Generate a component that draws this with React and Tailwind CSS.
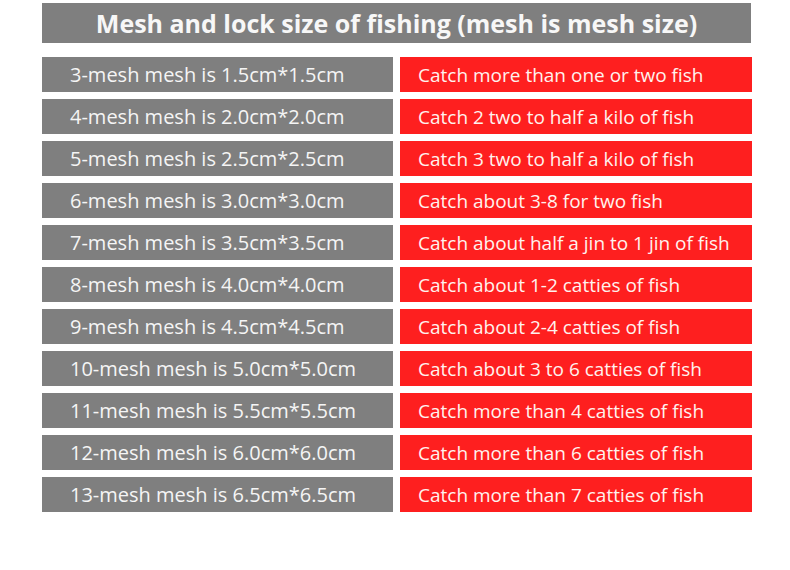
import React from "react";

const rows = [
  ["3-mesh mesh is 1.5cm*1.5cm", "Catch more than one or two fish"],
  ["4-mesh mesh is 2.0cm*2.0cm", "Catch 2 two to half a kilo of fish"],
  ["5-mesh mesh is 2.5cm*2.5cm", "Catch 3 two to half a kilo of fish"],
  ["6-mesh mesh is 3.0cm*3.0cm", "Catch about 3-8 for two fish"],
  ["7-mesh mesh is 3.5cm*3.5cm", "Catch about half a jin to 1 jin of fish"],
  ["8-mesh mesh is 4.0cm*4.0cm", "Catch about 1-2 catties of fish"],
  ["9-mesh mesh is 4.5cm*4.5cm", "Catch about 2-4 catties of fish"],
  ["10-mesh mesh is 5.0cm*5.0cm", "Catch about 3 to 6 catties of fish"],
  ["11-mesh mesh is 5.5cm*5.5cm", "Catch more than 4 catties of fish"],
  ["12-mesh mesh is 6.0cm*6.0cm", "Catch more than 6 catties of fish"],
  ["13-mesh mesh is 6.5cm*6.5cm", "Catch more than 7 catties of fish"],
];

export default function App() {
  return (
    <div
      className="w-[790px] h-[570px] bg-white pt-[3px] pl-[42px]"
      style={{ fontFamily: '"Open Sans", "Noto Sans", sans-serif' }}
    >
      <div className="w-[709px] h-[40px] bg-[#7f7f7f] flex items-center justify-center text-[#f7f7f7] font-bold text-[25px] pt-[1px]">
        Mesh and lock size of fishing (mesh is mesh size)
      </div>
      <div className="mt-[14px] flex flex-col gap-[7px]">
        {rows.map(([a, b]) => (
          <div key={a} className="flex gap-[7px] h-[35px]">
            <div className="w-[351px] bg-[#7f7f7f] flex items-center pl-[28px] pt-[1px] text-[#f5f5f5] text-[20px]">
              {a}
            </div>
            <div className="w-[352px] bg-[#fe1f1f] flex items-center pl-[18px] pt-[2px] text-[#fff2ee] text-[19px]">
              {b}
            </div>
          </div>
        ))}
      </div>
    </div>
  );
}
